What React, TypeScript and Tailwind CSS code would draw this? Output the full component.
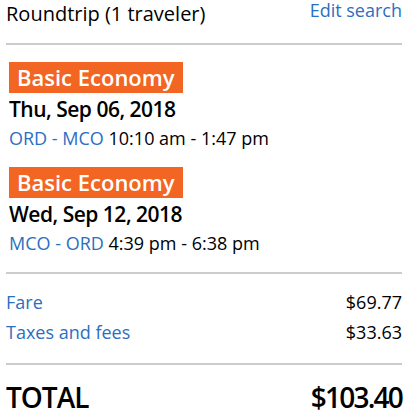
export default function App() {
  const flights = [
    { date: "Thu, Sep 06, 2018", route: "ORD - MCO", time: "10:10 am - 1:47 pm" },
    { date: "Wed, Sep 12, 2018", route: "MCO - ORD", time: "4:39 pm - 6:38 pm" },
  ];

  return (
    <div className="w-[408px] px-[6px] font-['Open_Sans',sans-serif] text-black">
      <div className="flex h-[45px] justify-between border-b-2 border-[#cccccc]">
        <span className="text-[20px] leading-[28px]">Roundtrip (1 traveler)</span>
        <a href="#" className="text-[18px] leading-[21px] text-[#2b6fc1]">
          Edit search
        </a>
      </div>

      <div className="pl-[3px] pt-[17px] pb-[16px] border-b-2 border-[#cccccc]">
        {flights.map((f, i) => (
          <div key={f.date} className={i > 0 ? "mt-[16px]" : ""}>
            <span className="inline-block h-[31px] bg-[#f26522] px-[8px] text-[22px] font-semibold leading-[31px] text-white">
              Basic Economy
            </span>
            <div className="mt-[3px] text-[21px] font-semibold leading-[26px] tracking-[-0.5px]">{f.date}</div>
            <div className="mt-[3px] text-[18px] leading-[26px]">
              <span className="text-[#2b6fc1]">{f.route}</span> {f.time}
            </div>
          </div>
        ))}
      </div>

      <div className="pt-[13px] pb-[16px] border-b-2 border-[#cccccc] text-[18px] leading-[30px]">
        <div className="flex justify-between">
          <span className="text-[#2b6fc1]">Fare</span>
          <span>$69.77</span>
        </div>
        <div className="flex justify-between">
          <span className="text-[#2b6fc1]">Taxes and fees</span>
          <span>$33.63</span>
        </div>
      </div>

      <div className="mt-[14px] flex justify-between text-[28px] font-semibold leading-[36px]">
        <span className="tracking-[-1px]">TOTAL</span>
        <span className="tracking-[-1.8px]">$103.40</span>
      </div>
    </div>
  );
}
